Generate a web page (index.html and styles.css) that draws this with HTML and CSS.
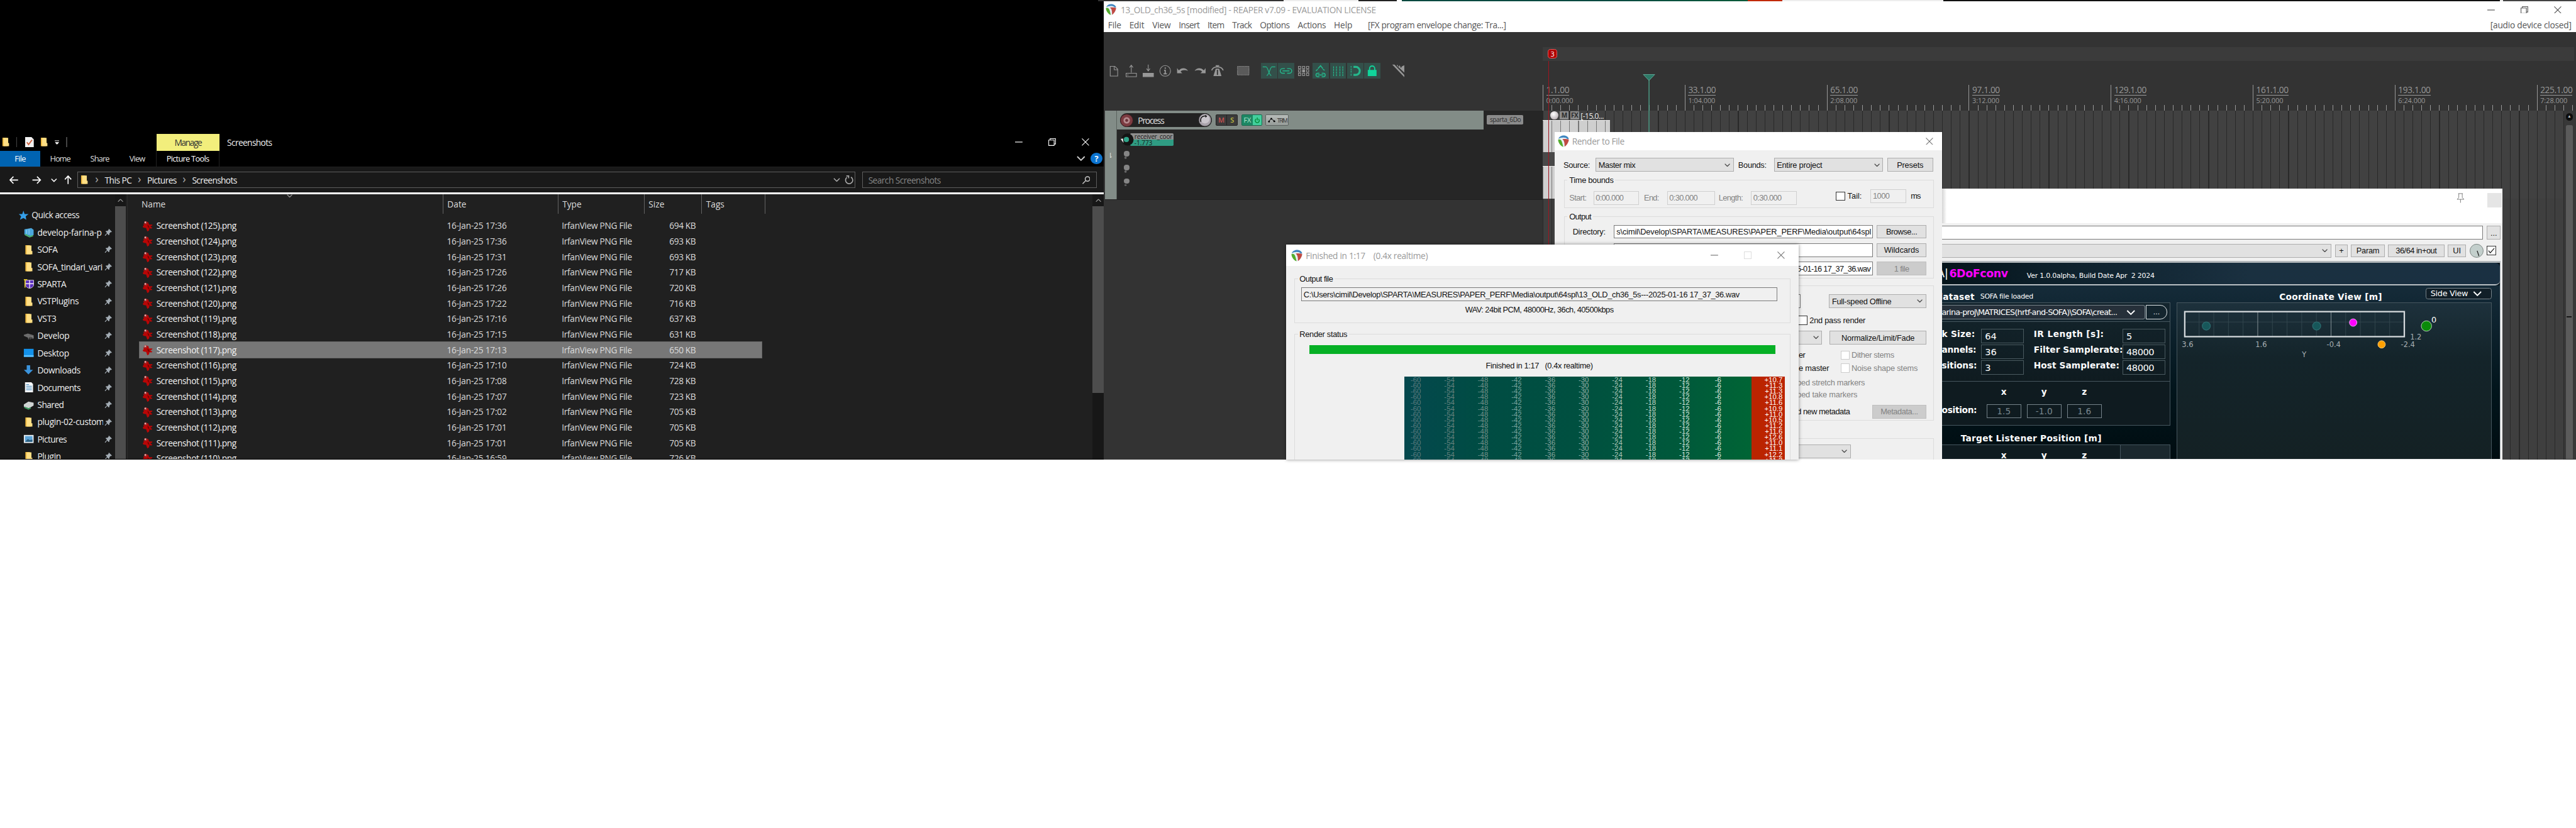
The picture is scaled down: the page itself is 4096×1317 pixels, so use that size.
FILE: index.html
```html
<!DOCTYPE html>
<html lang="en">
<head>
<meta charset="utf-8">
<title>Desktop</title>
<link rel="stylesheet" href="styles.css">
</head>
<body>
<svg class="defs" width="0" height="0">
  <defs>
    <symbol id="logo" viewBox="0 0 20 20"><path d="M10 0C15 0 19.500 3 19.500 7.500C19.500 12 14 20 10.500 20C6 20 .5 12 .5 7.500C.5 3 5 0 10 0Z" fill="#e9f1f5"/><path d="M1 5.500C3 1.500 7 0 10 0C14 0 18 2 19.200 5.500L17 6.500C15 4 12 3.400 9.500 3.500C6 3.500 3.500 4.500 1 5.500Z" fill="#3f86c0"/><path d="M.6 7.500C3 6.500 5 7 6.500 9.500C8 12.500 8.500 16 9.500 19.800C5 19 .4 12 .6 7.500Z" fill="#54ad2f"/><path d="M8 6.500C11 5.500 16 6 19 7C19.600 10 16 17.500 11.800 19.600C12 14 11.500 9 8 6.500Z" fill="#c04a43"/></symbol>
    <symbol id="folder" viewBox="0 0 13 17"><path d="M1 1h7l2 2v13H1z" fill="#f0b93f"/><path d="M3 1.500h8v9h1.500V16H3z" fill="#ffdf85"/></symbol>
    <symbol id="pin" viewBox="0 0 14 14"><path d="M8 1l5 5-1 1-1-.3-2.300 2.300.1 2-1.200 1.200-2.800-2.800L2 13.200l-1-.2L.8 12.200 4.600 8.200 2 5.600l1.300-1 1.800.2L7.400 2.600 7 1.800z" fill="#a3acb4"/></symbol>
    <symbol id="irfan" viewBox="0 0 20 20"><path d="M2 6l4 1 3-4 2 1 1 4 6 0-1 2-3 1 4 3-3 1-2-1-1 4-3 2-2-6-5-1-1-2 2-2z" fill="#b80606"/><path d="M9 8l3 2 1 5-3-3z" fill="#7d0000"/><circle cx="6" cy="4.500" r="2.600" fill="#a83a3a"/><circle cx="5.500" cy="4" r="1.200" fill="#f1c8c8"/></symbol>
    <symbol id="chev" viewBox="0 0 10 6"><path d="M.7.700L5 5 9.300.7" fill="none" stroke="currentColor" stroke-width="1.400"/></symbol>
    <symbol id="close" viewBox="0 0 13 13"><path d="M.5.500l12 12M12.500.500l-12 12" stroke="currentColor" stroke-width="1.200"/></symbol>
    <symbol id="restore" viewBox="0 0 13 13"><path d="M.6 3h9.400v9.400H.6zM3 3V.6h9.400V10H10" fill="none" stroke="currentColor" stroke-width="1.200"/></symbol>
    <symbol id="min" viewBox="0 0 13 13"><path d="M0 6.500h13" stroke="currentColor" stroke-width="1.300"/></symbol>
  </defs>
</svg>
<main class="desktop">

  <section class="explorer">
    <header class="ex-title">
      <div class="ex-quick">
        <svg class="fold"><use href="#folder"/></svg><i class="bar"></i>
        <svg width="15" height="18" viewBox="0 0 15 18"><path d="M0 0h11l4 4v14H0z" fill="#f2f2f2"/><path d="M3 9l3 4 6-8" fill="none" stroke="#d0603c" stroke-width="2"/></svg>
        <svg class="fold"><use href="#folder"/></svg>
        <svg width="8" height="8" viewBox="0 0 8 8"><path d="M0 1h8M1 4h6L4 7z" stroke="#fff" fill="#fff"/></svg><i class="bar"></i>
      </div>
      <div class="ex-manage"><span data-w="47">Manage</span></div>
      <div class="ex-name"><span data-w="78">Screenshots</span></div>
      <div class="ex-buttons"><svg class="wb"><use href="#min"/></svg><svg class="wb"><use href="#restore"/></svg><svg class="wb"><use href="#close"/></svg></div>
    </header>
    <nav class="ex-ribbon">
      <b class="file"><span data-w="19">File</span></b><span class="tab" data-w="35">Home</span><span class="tab" data-w="33">Share</span><span class="tab" data-w="27">View</span><span class="pict"><span data-w="74">Picture Tools</span></span>
      <div class="ex-help"><svg width="15" height="9"><use href="#chev"/></svg><b class="q">?</b></div>
    </nav>
    <div class="ex-address">
      <svg width="112" height="16" viewBox="0 0 112 16" fill="none" stroke="#fff" stroke-width="1.800"><path d="M15 8H1M7 2L1 8l6 6M40 8h14M48 2l6 6-6 6"/><path d="M73 6l4.500 4.500L82 6" stroke-width="1.600"/><path d="M102 15V1M96.500 7L102 1l5.500 6"/></svg>
      <div class="path">
        <svg class="fold"><use href="#folder"/></svg><i>›</i><span data-w="47">This PC</span><i>›</i><span data-w="51">Pictures</span><i>›</i><span data-w="78">Screenshots</span>
        <div class="path-end"><svg width="12" height="7"><use href="#chev"/></svg><svg width="16" height="16" viewBox="0 0 16 16" fill="none" stroke="#aaa" stroke-width="1.800"><path d="M4 3.500A6.200 6.200 0 1 0 11 3M3 1h4v4"/></svg></div>
      </div>
      <div class="search"><span data-w="126">Search Screenshots</span><svg width="14" height="14" viewBox="0 0 14 14" fill="none" stroke="#c8c8c8" stroke-width="1.600"><circle cx="9" cy="5" r="4"/><path d="M6 8l-5.500 5.500"/></svg></div>
    </div>
    <div class="ex-line"></div>
    <div class="ex-main">
      <div class="ex-nav" id="nav"></div>
      <div class="sb"><svg width="10" height="6"><use href="#chev"/></svg><i></i></div>
      <div class="ex-files">
        <div class="ex-head"><span>Name</span><span>Date</span><span>Type</span><span>Size</span><span>Tags</span><svg class="sort" width="10" height="6"><use href="#chev"/></svg></div>
        <div id="files"></div>
      </div>
      <div class="sb sb-right"><svg width="10" height="6"><use href="#chev"/></svg><i></i></div>
    </div>
  </section>

  <section class="reaper">
    <header class="rp-title"><svg width="19" height="20"><use href="#logo"/></svg><span data-w="444">13_OLD_ch36_5s [modified] - REAPER v7.09 - EVALUATION LICENSE</span>
      <div class="rp-buttons"><svg class="wb"><use href="#min"/></svg><svg class="wb"><use href="#restore"/></svg><svg class="wb"><use href="#close"/></svg></div></header>
    <nav class="rp-menu"><span data-w="23">File</span><span data-w="26">Edit</span><span data-w="32">View</span><span data-w="36">Insert</span><span data-w="29">Item</span><span data-w="34">Track</span><span data-w="52">Options</span><span data-w="49">Actions</span><span data-w="32">Help</span><span class="undo" data-w="240">[FX program envelope change: Tra...]</span><span class="dev" data-w="141">[audio device closed]</span></nav>
    <div class="rp-body">
      <div class="rp-left">
        <div class="toolbar">
          <svg viewBox="0 0 28 28"><path d="M8 6h8l5 5v12H8zM15 6v6h6"/></svg>
          <svg viewBox="0 0 28 28"><path d="M14 17V4M11 8l3-4 3 4M5 18h18v6H5z"/><path d="M7 21h2"/></svg>
          <svg viewBox="0 0 28 28"><path d="M14 3v11M11 10l3 4 3-4"/><path d="M5 18h18v6H5z" fill="#989898"/></svg>
          <svg viewBox="0 0 28 28"><circle cx="14" cy="14" r="9.300"/><path d="M14 8v2.500M12 13h2v6M11 19h6" stroke-width="2"/></svg>
          <svg viewBox="0 0 28 28"><path d="M4 9v9h9l-3-3c3-3 8-3 13-1c-4-6-11-6-16-1z" class="f"/></svg>
          <svg viewBox="0 0 28 28"><path d="M24 9v9h-9l3-3c-3-3-8-3-13-1c4-6 11-6 16-1z" class="f"/></svg>
          <svg viewBox="0 0 28 28"><path d="M11 10h6l4 13H7z" class="f"/><path class="slot" d="M14 12v9"/><path d="M4 13c3-8 17-8 20 0M11 5h6" stroke-width="2"/></svg>
          <svg class="gap" viewBox="0 0 28 28"><path d="M4 6h20v15H4z" fill="#5a5a5a" stroke-dasharray="1.500 1"/></svg>
          <svg class="gap on" viewBox="0 0 28 28"><path d="M3 7h6c3 0 5 15 9 15M25 7h-6c-3 0-5 15-9 15" stroke-width="1.300"/></svg>
          <svg class="on" viewBox="0 0 28 28"><path d="M12 18H8a4 4 0 0 1 0-8h4M16 10h4a4 4 0 0 1 0 8h-4M8 14h12" stroke-width="1.600"/></svg>
          <svg viewBox="0 0 28 28"><path d="M5 6h4v4H5zM12 6h4v4h-4zM19 6h4v4h-4zM5 12h4v4H5zM19 12h4v4h-4zM5 18h4v4H5zM12 18h4v4h-4zM19 18h4v4h-4z"/><path class="f" d="M11.500 11.500h5v5h-5z"/></svg>
          <svg class="on" viewBox="0 0 28 28"><path d="M6 14l3-3M9.500 10L14 5l4 5M18 11l3 2M12 24H9a3 3 0 0 1 0-6h3M16 18h3a3 3 0 0 1 0 6h-3M9 21h10" stroke-width="1.700"/></svg>
          <svg class="on" viewBox="0 0 28 28"><path d="M6 6v17M11 6v17M17 6v17M22 6v17" stroke-dasharray="3.500 1" stroke-width="1.300"/></svg>
          <svg class="on" viewBox="0 0 28 28"><path d="M11 7h4a7 7 0 0 1 0 14h-4" stroke-width="3.500"/><path d="M6 7h2M6 21h2M7 10v8" stroke-dasharray="2 1.500" stroke-width="1.800"/></svg>
          <svg class="on lock" viewBox="0 0 28 28"><path d="M9.500 13v-3a4.500 4.500 0 0 1 9 0v3" stroke-width="2"/><path d="M7 13h14v9.500H7z" fill="#10d69b"/></svg>
          <svg class="gap" viewBox="0 0 28 28"><path class="f" d="M3 3h4l17 18v4z"/><path class="f" d="M9 3l2 2 1-2 2 4 2-3 2 5 2-3 4-2v13z"/></svg>
        </div>
        <div class="tcp">
          <div class="tcp-index"><span>1</span></div>
          <div class="tcp-main">
            <div class="tcp-row">
              <div class="tcp-head">
                <div class="tcp-name"><i class="rec"></i><span data-w="45">Process</span><svg class="knob" width="24" height="24" viewBox="0 0 24 24"><circle cx="12" cy="12" r="11" fill="#a9a3ab" stroke="#333"/><circle cx="12" cy="10" r="8" fill="#c9c5cb"/><path d="M5 15C3 8 8 4 13 5" fill="none" stroke="#111" stroke-width="1.600"/><path d="M12 3l4 2-3 3z" fill="#111"/></svg></div>
                <div class="ms"><b class="m">M</b><b class="s">S</b></div>
                <div class="fx"><b>FX</b><b class="pw"><svg width="9" height="10" viewBox="0 0 9 10"><path d="M2.500 2.500a3.500 3.500 0 1 0 4 0M4.500 0v5" fill="none" stroke="#083" stroke-width="1.500"/></svg></b></div>
                <div class="trim"><svg width="14" height="9" viewBox="0 0 14 9"><path d="M1 7l5-5 5 4 2 1" fill="none" stroke="#333" stroke-width="1.300"/><circle cx="2" cy="7" r="1.500"/><circle cx="6" cy="2" r="1.500"/><circle cx="11" cy="6.500" r="1.500"/></svg><span data-w="17">TRIM</span></div>
              </div>
              <div class="chip"><span data-w="54">sparta_6Do</span></div>
            </div>
            <div class="param"><svg width="24" height="24" viewBox="0 0 24 24"><circle cx="13" cy="12" r="10.500" fill="#141414"/><circle cx="11" cy="12" r="4.500" fill="#2fa58a"/><path d="M1 11l4-1 1 8z" fill="#e8e8e8"/></svg><div class="plabel"><span data-w="66">receiver_coor</span><span data-w="31">-1.773</span></div></div>
            <div class="dots"><i></i><i></i><i></i></div>
          </div>
        </div>
      </div>
      <div class="arrange">
        <div class="lane"><b>3</b></div>
        <div class="ruler">
          <div><span data-w="40">1.1.00</span><small data-w="47">0:00.000</small></div>
          <div><span data-w="48">33.1.00</span><small data-w="47">1:04.000</small></div>
          <div><span data-w="48">65.1.00</span><small data-w="47">2:08.000</small></div>
          <div><span data-w="48">97.1.00</span><small data-w="47">3:12.000</small></div>
          <div><span data-w="56">129.1.00</span><small data-w="47">4:16.000</small></div>
          <div><span data-w="56">161.1.00</span><small data-w="47">5:20.000</small></div>
          <div><span data-w="56">193.1.00</span><small data-w="47">6:24.000</small></div>
          <div><span data-w="56">225.1.00</span><small data-w="47">7:28.000</small></div>
        </div>
        <div class="grid-row">
          <div class="tracks">
            <div class="item-head"><i class="ik"></i><b>M</b><b>FX</b><span data-w="40">[-15.0...</span></div>
            <div class="item"></div><div class="item-gap"></div><div class="item two"></div>
            <div class="tracks-empty"></div>
          </div>
          <div class="rp-scroll"><i>▲</i><b></b></div>
        </div>
        <svg class="cursor" width="22" height="110" viewBox="0 0 22 110"><path d="M11 10v100" stroke="#4fa58d" stroke-width="1.500"/><path d="M1 .5h20L11 11z" fill="#2d7967" stroke="#63ab98"/></svg>
        <i class="redline"></i>
      </div>
    </div>
  </section>
  <div class="seam"></div>

  <section class="fxwin">
    <header><svg width="14" height="18" viewBox="0 0 14 18" fill="none" stroke="#777"><path d="M3 1h8M4 1v7L1 11h12l-3-3V1M7 11v6"/></svg><i></i></header>
    <div class="fx-comment"><div class="inp"></div><div class="btn">...</div></div>
    <div class="fx-controls"><div class="sel"><svg class="cv"><use href="#chev"/></svg></div><div class="btn">+</div><div class="btn"><span data-w="40">Param</span></div><div class="btn"><span data-w="71">36/64 in+out</span></div><div class="btn">UI</div><svg width="24" height="26" viewBox="0 0 24 26"><circle cx="12" cy="13" r="11.500" fill="#c3cfcc" stroke="#76807d"/><path d="M13 13l3 9" stroke="#222" stroke-width="1.500"/></svg><div class="chk"><svg width="12" height="10" viewBox="0 0 12 10"><path d="M1 5l3 4 7-8" fill="none" stroke="#222" stroke-width="1.400"/></svg></div></div>
    <div class="plugin">
      <div class="pl-head"><b class="w">A|</b><b class="mg" data-w="102">6DoFconv</b><span data-w="222">Ver 1.0.0alpha, Build Date Apr&nbsp; 2 2024</span></div>
      <div class="pl-body">
        <div class="pl-left">
          <div class="pl-cap"><b data-w="66">dataset</b><span data-w="92">SOFA file loaded</span></div>
          <div class="pl-combo"><div class="combo"><span data-w="305">arina-proj\MATRICES(hrtf-and-SOFA)\SOFA\creat...</span><svg width="18" height="9"><use href="#chev"/></svg></div><div class="more">...</div></div>
          <div class="pl-info">
            <b><span data-w="58">k Size:</span></b><div>64</div><b class="l"><span data-w="122">IR Length [s]:</span></b><div>5</div>
            <b><span data-w="60">annels:</span></b><div>36</div><b class="l"><span data-w="155">Filter Samplerate:</span></b><div><span data-w="48">48000</span></div>
            <b><span data-w="61">sitions:</span></b><div>3</div><b class="l"><span data-w="149">Host Samplerate:</span></b><div><span data-w="48">48000</span></div>
          </div>
          <div class="pl-pos">
            <b></b><b>x</b><b>y</b><b>z</b>
            <b class="r"><span data-w="61">osition:</span></b><div>1.5</div><div>-1.0</div><div>1.6</div>
          </div>
          <div class="pl-target"><b data-w="245">Target Listener Position [m]</b></div>
          <div class="pl-pos last"><b></b><b>x</b><b>y</b><b>z</b><i></i></div>
        </div>
        <div class="pl-right">
          <div class="pl-rcap"><b data-w="179">Coordinate View [m]</b><div class="side"><span data-w="65">Side View</span><svg width="18" height="9"><use href="#chev"/></svg></div></div>
          <svg class="plot" width="547" height="271" viewBox="0 0 547 271">
            <path d="M13 33H394M38 15V58M63.500 15V58M89 15V58M114.500 15V58M165.500 15V58M191 15V58M216.500 15V58M242 15V58M293 15V58M318.500 15V58M344 15V58M369.500 15V58" stroke="#34474f"/>
            <path d="M140 15V58M267.500 15V58" stroke="#8d999e"/>
            <rect x="13" y="15" width="382" height="43.500" fill="none" stroke="#d5dadd" stroke-width="2.500"/>
            <g fill="#17575a" stroke="#2a6a6d" stroke-width="1.500"><circle cx="50.500" cy="40" r="7"/><circle cx="242.500" cy="40" r="7"/></g>
            <circle cx="306" cy="34" r="6.500" fill="#f0f" stroke="#ffb4ff"/>
            <circle cx="433.500" cy="40" r="9" fill="#0a8a0a" stroke="#c5d8c5"/>
            <circle cx="355.500" cy="72" r="6.500" fill="#ffa000" stroke="#ffd080"/>
            <text x="442" y="34" class="wt">0</text>
            <text x="405" y="63.500">1.2</text><text x="8" y="76.500">3.6</text><text x="136" y="76.500">1.6</text><text x="260" y="76.500">-0.4</text><text x="389" y="76.500">-2.4</text><text x="217" y="94">Y</text>
          </svg>
        </div>
      </div>
    </div>
  </section>

  <section class="dialog render">
    <header><svg width="20" height="21"><use href="#logo"/></svg><span data-w="91">Render to File</span><svg class="x wb"><use href="#close"/></svg></header>
    <div class="r-source"><span data-w="46">Source:</span><div class="sel"><span data-w="64">Master mix</span><svg class="cv"><use href="#chev"/></svg></div><i></i><span data-w="49">Bounds:</span><div class="sel"><span data-w="79">Entire project</span><svg class="cv"><use href="#chev"/></svg></div><i></i><div class="btn"><span data-w="46">Presets</span></div></div>
    <div class="group g-time"><div class="gt"><span data-w="77">Time bounds</span></div>
      <div class="r-time dis"><span data-w="30">Start:</span><div class="inp"><span data-w="48">0:00.000</span></div><i></i><span data-w="26">End:</span><div class="inp"><span data-w="49">0:30.000</span></div><i></i><span data-w="42">Length:</span><div class="inp"><span data-w="49">0:30.000</span></div><i></i><div class="chk up"></div><i></i><span class="blk up" data-w="25">Tail:</span><div class="inp up"><span data-w="29">1000</span></div><i></i><span class="blk up" data-w="17">ms</span></div></div>
    <div class="group g-out"><div class="gt"><span data-w="38">Output</span></div>
      <div class="r-out"><span data-w="57">Directory:</span><div class="inp"><span data-w="443">s\cimil\Develop\SPARTA\MEASURES\PAPER_PERF\Media\output\64spl</span></div><i></i><div class="btn"><span data-w="54">Browse...</span></div></div>
      <div class="r-out"><span></span><div class="inp"></div><i></i><div class="btn"><span data-w="61">Wildcards</span></div></div>
      <div class="r-out"><span></span><div class="inp end"><span data-w="128">5-01-16 17_37_36.wav</span></div><i></i><div class="btn off"><span data-w="26">1 file</span></div></div></div>
    <div class="group g-opt">
      <div class="r-a"><div class="inp"></div><i></i><div class="sel"><span data-w="103">Full-speed Offline</span><svg class="cv"><use href="#chev"/></svg></div></div>
      <div class="r-b"><div class="chk"></div><span data-w="97">2nd pass render</span></div>
      <div class="r-c"><div class="sel"><svg class="cv"><use href="#chev"/></svg></div><i></i><div class="btn"><span data-w="127">Normalize/Limit/Fade</span></div></div>
      <div class="r-d"><span data-w="11">er</span><div class="chk"></div><span class="g" data-w="74">Dither stems</span></div>
      <div class="r-d"><span data-w="53">e master</span><div class="chk"></div><span class="g" data-w="115">Noise shape stems</span></div>
      <div class="r-e"><span class="g" data-w="118">ped stretch markers</span></div>
      <div class="r-e"><span class="g" data-w="105">ped take markers</span></div>
      <div class="r-f"><span data-w="92">d new metadata</span><div class="btn off"><span data-w="65">Metadata...</span></div></div>
    </div>
    <div class="group g-last"><div class="sel"><svg class="cv"><use href="#chev"/></svg></div></div>
  </section>

  <section class="dialog finished">
    <header><svg width="20" height="21"><use href="#logo"/></svg><span data-w="212">Finished in 1:17 &nbsp; &nbsp;(0.4x realtime)</span><div class="f-buttons"><svg class="wb"><use href="#min"/></svg><i></i><svg class="wb"><use href="#close"/></svg></div></header>
    <div class="group f-file"><div class="gt"><span data-w="58">Output file</span></div>
      <div class="inp"><span data-w="758">C:\Users\cimil\Develop\SPARTA\MEASURES\PAPER_PERF\Media\output\64spl\13_OLD_ch36_5s---2025-01-16 17_37_36.wav</span></div>
      <p><span data-w="258">WAV: 24bit PCM, 48000Hz, 36ch, 40500kbps</span></p></div>
    <div class="group f-status"><div class="gt"><span data-w="83">Render status</span></div>
      <div class="progress"></div>
      <p><span data-w="186">Finished in 1:17 &nbsp; (0.4x realtime)</span></p>
      <div class="meter" id="meter"></div></div>
  </section>
</main>
<script src="app.js"></script>
</body>
</html>
```
FILE: styles.css
```css
* { box-sizing: border-box; }
body { margin: 0; background: #fff; }
svg { display: block; flex: none; }
.defs { position: absolute; }
i, b { font-style: normal; }
span { white-space: nowrap; }
.desktop { position: relative; width: 4480px; height: 1440px; zoom: 0.9142857; overflow: hidden; background: #fff; font: 15px "Open Sans", "Noto Sans", sans-serif; }
.wb { width: 13px; height: 13px; }
.fold { width: 13px; height: 17px; }

/* Explorer */
.explorer { position: absolute; left: 0; top: 0; width: 1920px; height: 799px; background: #000; color: #f2f2f2; display: flex; flex-direction: column; overflow: hidden; padding-top: 233px; }
.ex-title { flex: none; height: 29px; display: flex; align-items: center; }
.ex-quick { width: 272px; display: flex; align-items: center; padding-left: 3px; }
.ex-quick .bar { width: 2px; height: 17px; background: #444; margin: 0 14px 0 10px; }
.ex-quick svg + .fold { margin: 0 12px 0 11px; }
.ex-quick svg + .bar { margin-left: 12px; }
.ex-manage { width: 110px; height: 29px; background: #f2ee7c; color: #333; display: flex; align-items: center; justify-content: center; }
.ex-name { padding-left: 13px; }
.ex-buttons { margin-left: auto; display: flex; gap: 45px; padding-right: 26px; color: #fff; }
.ex-ribbon { flex: none; height: 28px; display: flex; align-items: center; color: #ddd; font-size: 14px; }
.ex-ribbon .file { width: 70px; height: 28px; background: #0063b1; display: flex; align-items: center; justify-content: center; font-weight: 400; margin-right: 17px; color: #fff; }
.ex-ribbon .tab { margin-right: 35px; }
.ex-ribbon .tab:nth-of-type(3) { margin-right: 19px; }
.pict { width: 111px; height: 28px; border: solid #222; border-width: 0 1px; display: flex; align-items: center; justify-content: center; color: #fff; }
.ex-help { margin-left: auto; display: flex; align-items: center; gap: 9px; padding-right: 3px; color: #ccc; }
.q { width: 20px; height: 20px; border-radius: 50%; background: #0b74d1; color: #fff; text-align: center; line-height: 20px; }
.ex-address { flex: none; height: 45px; background: #191919; display: flex; align-items: center; padding-left: 16px; border-top: 1px solid #202020; }
.ex-address > svg { margin-right: 6px; }
.path { width: 1354px; height: 28px; border: 1px solid #5d5d5d; display: flex; align-items: center; padding-left: 5px; }
.path i { width: 27px; text-align: center; color: #aaa; font-size: 20px; line-height: 20px; padding-bottom: 4px; }
.path .fold + i { margin-left: 2px; }
.path-end { margin-left: auto; display: flex; align-items: center; gap: 8px; color: #aaa; padding-right: 2px; }
.search { margin-left: 12px; width: 408px; height: 28px; border: 1px solid #5d5d5d; display: flex; align-items: center; justify-content: space-between; padding: 0 11px 0 9px; color: #868686; }
.ex-line { flex: none; height: 3px; background: #fff; }
.ex-main { height: 461px; display: flex; background: #202020; overflow: hidden; }
.ex-nav { width: 200px; background: #191919; padding-top: 21px; }
.nav-item { height: 30px; display: flex; align-items: center; padding-left: 40px; }
.nav-item .ic { width: 19px; height: 18px; margin-right: 6px; }
.nav-item .tx { width: 114px; overflow: hidden; margin-right: 3px; }
.nav-item.root { padding-left: 32px; }
.nav-item.root .ic { margin-right: 4px; }
.sb { width: 19px; background: #171717; color: #999; margin-right: 2px; }
.sb svg { transform: rotate(180deg); margin: 8px auto 7px; }
.sb i { display: block; height: 440px; background: #4d4d4d; }
.sb-right { margin: 0 0 0 auto; width: 20px; }
.sb-right i { height: 325px; }
.ex-files { width: 1110px; border-left: 1px solid #2c2c2c; }
.ex-head { position: relative; height: 32px; display: grid; grid-template-columns: 549px 200px 150px 100px 110px; margin-bottom: 9px; color: #dedede; }
.ex-head span { border-right: 1px solid #636363; padding-left: 7px; line-height: 34px; }
.ex-head span:first-child { padding-left: 24px; }
.sort { position: absolute; left: 277px; top: 0; color: #999; }
.frow { margin-left: 21px; width: 1081px; height: 27px; display: grid; grid-template-columns: 534px 200px 150px 83px; align-items: center; color: #dcdcdc; }
.frow .n { display: flex; align-items: center; gap: 5px; padding-left: 4px; color: #f5f5f5; }
.frow .sz { text-align: right; }
.frow.sel-row { background: #777; outline: 1px solid #666; outline-offset: -1px; }

/* Reaper main window */
.reaper { position: absolute; left: 1920px; top: 2px; width: 2560px; height: 797px; background: #333; display: flex; flex-direction: column; overflow: hidden; }
.seam { position: absolute; left: 1910px; top: 0; width: 2570px; height: 2px; background: linear-gradient(90deg, #333 323px, #eee 323px 453px, #222 453px 520px, #fff 520px 528px, #064a40 528px 900px, #0b5a3a 1130px, #c22a08 1130px 1190px, #eee 1190px 1470px, #111 1470px 2438px, #eee 2438px 2443px, #444 2443px); }
.rp-title { flex: none; height: 30px; background: #fff; color: #999; display: flex; align-items: center; padding-left: 3px; gap: 7px; }
.rp-buttons { margin-left: auto; display: flex; gap: 45px; padding-right: 25px; color: #555; }
.rp-menu { flex: none; height: 24px; background: #fff; color: #555; display: flex; align-items: center; gap: 14px; padding: 0 8px 2px 7px; }
.rp-menu .undo { margin-left: 13px; }
.rp-menu .dev { margin-left: auto; }
.rp-body { flex: 1; display: flex; }
.rp-left { flex: none; width: 763px; }
.toolbar { height: 137px; padding: 53px 0 0 3px; display: flex; gap: 2px; }
.toolbar svg { width: 28px; height: 28px; fill: none; stroke: #989898; stroke-width: 1.2; }
.toolbar .f { fill: #989898; stroke: none; }
.toolbar .slot { stroke: #333; stroke-width: 2; }
.toolbar .gap { margin-left: 15px; }
.toolbar .on { background: #33504a; stroke: #25b88c; }
.toolbar .lock { stroke: #10d69b; }
.tcp { height: 155px; margin-left: 2px; display: flex; background: #262626; border-bottom: 1px solid #202020; }
.tcp-index { width: 20px; background: #828c87; color: #eee; font-size: 11px; display: flex; align-items: center; justify-content: center; border-right: 1px solid #5b625e; }
.tcp-index span { transform: rotate(180deg); }
.tcp-main { flex: 1; }
.tcp-row { display: flex; height: 32px; }
.tcp-head { flex: none; width: 638px; background: #828c87; display: flex; align-items: center; padding-left: 6px; }
.tcp-name { width: 160px; height: 24px; border-radius: 12px; background: #222; color: #e4e4e4; display: flex; align-items: center; gap: 8px; margin-right: 6px; }
.rec { width: 23px; height: 23px; border-radius: 50%; background: radial-gradient(circle, #6b3138 0 2px, #b48a8e 3px 5px, #7c3b41 6px); border: 1px solid #3b1c1f; }
.knob { margin-left: auto; }
.ms, .fx { display: flex; height: 20px; border: 1px solid #222; border-radius: 2px; font-size: 12px; line-height: 18px; text-align: center; overflow: hidden; }
.ms { width: 39px; background: #3b3b3b; margin-right: 6px; }
.ms b { flex: 1; font-weight: 600; }
.m { color: #c85050; border-right: 1px solid #222; }
.s { color: #bdbc40; }
.fx { width: 36px; background: #1d8764; border-color: #17674d; color: #aee8d0; margin-right: 6px; }
.fx b { width: 20px; font-weight: 400; }
.fx .pw { width: 16px; background: #43cf9d; padding: 4px 3px; }
.trim { width: 40px; height: 20px; border: 1px solid #5c625f; border-radius: 2px; background: linear-gradient(#b7bcb9, #969c99); display: flex; align-items: center; gap: 2px; padding-left: 3px; font-size: 10px; color: #333; }
.chip { flex: none; margin: 7px 0 0 6px; width: 63px; height: 17px; border-radius: 2px; background: #8b8b8b; color: #2c2c2c; font-size: 11px; line-height: 16px; padding-left: 5px; }
.param { display: flex; height: 24px; margin: 6px 0 0 6px; }
.plabel { width: 75px; height: 22px; margin: 1px 0 0 -6px; border-radius: 2px; background: linear-gradient(#8f8f8f 50%, #2f9c83 50%); padding-left: 7px; font-size: 11px; line-height: 11px; color: #1a1a1a; display: flex; flex-direction: column; align-items: flex-start; }
.param svg { position: relative; z-index: 1; }
.dots { display: flex; flex-direction: column; gap: 15px; padding: 8px 0 0 13px; }
.dots i { width: 9px; height: 9px; border-radius: 50%; background: #858585; box-shadow: -2px 7px 0 -3px #666; }
.arrange { position: relative; flex: none; width: 1797px; display: flex; flex-direction: column; padding-top: 26px; }
.lane { margin-right: 3px; height: 24px; background: #3b3b3b; padding: 3px 0 0 9px; }
.lane b { display: block; width: 16px; height: 17px; border-radius: 5px; background: #b10000; border: 1px solid #e06060; color: #fff; font: 12px/15px "Open Sans", sans-serif; text-align: center; }
.ruler { height: 45px; margin: 42px 0 0; flex: none; display: flex; overflow: hidden; color: #989898; background: repeating-linear-gradient(90deg, #989898 0 1.100px, transparent 1.100px 15.436px) 0 100% / 100% 10px no-repeat; font-size: 15px; }
.ruler div { flex: none; width: 246.970px; height: 45px; border-left: 1px solid #989898; padding-left: 5px; display: flex; flex-direction: column; align-items: flex-start; }
.ruler span { line-height: 17px; border-bottom: 1px solid #989898; }
.ruler small { font-size: 12px; line-height: 18px; }
.grid-row { flex: 1; display: flex; }
.tracks { width: 1776px; background: repeating-linear-gradient(90deg, #292929 0 1.200px, #414141 1.200px 15.436px); }
.item-head { height: 16px; width: 117px; display: flex; align-items: center; gap: 3px; padding-left: 13px; font-size: 13px; color: #eee; }
.ik { width: 14px; height: 14px; border-radius: 50%; background: radial-gradient(circle at 40% 35%, #fff, #a59a9f); }
.item-head b { width: 15px; height: 14px; background: #8b8b8b; color: #2a2a2a; font-size: 11px; line-height: 14px; text-align: center; letter-spacing: -.5px; }
.item { width: 117px; height: 56px; border-top: 2px solid #eee; background: repeating-linear-gradient(90deg, #777 0 1.200px, #cfcfcf 1.200px 15.436px); }
.item-gap { width: 21px; height: 24px; background: #484848; }
.item.two { height: 57px; width: 21px; }
.tracks-empty { height: 453px; background: rgba(50, 50, 50, .1); }
.rp-scroll { width: 21px; background: #383838; padding-left: 3px; }
.rp-scroll i { display: block; width: 13px; height: 13px; margin: 4px 0 8px; border-radius: 50%; background: #0d0d0d; color: #ccc; font-size: 7px; line-height: 12px; text-align: center; }
.rp-scroll b { display: block; width: 13px; height: 581px; border-radius: 3px 3px 0 0; background: linear-gradient(#111, #111) 50% 332px / 9px 2px no-repeat, #5b5b5b; }
.cursor { position: absolute; left: 174px; top: 73px; }
.redline { position: absolute; left: 10px; top: 50px; width: 1px; height: 700px; background: #a31420; }

/* Shared form controls */
.sel, .btn { background: #e1e1e1; border: 1px solid #adadad; height: 24px; display: flex; align-items: center; color: #111; }
.sel { justify-content: space-between; padding: 0 5px 0 4px; }
.btn { justify-content: center; }
.off { background: #ccc; border-color: #bfbfbf; color: #838383; }
.cv { width: 10px; height: 6px; color: #444; margin-left: auto; }
.inp { background: #fff; border: 1px solid #7a7a7a; height: 24px; display: flex; align-items: center; padding-left: 3px; }
.chk { width: 16px; height: 16px; background: #fff; border: 1px solid #333; display: flex; align-items: center; justify-content: center; }
.g, .dis { color: #838383; }

/* Dialogs */
.dialog { position: absolute; background: #f0f0f0; color: #111; font: 14px "Liberation Sans", Arial, sans-serif; display: flex; flex-direction: column; overflow: hidden; }
.dialog header { flex: none; background: #fff; color: #999; font: 15px "Open Sans", sans-serif; display: flex; align-items: center; gap: 5px; }
.group { flex: none; border: 1px solid #dcdcdc; }
.gt { width: max-content; height: 18px; line-height: 18px; margin: -9px 0 0 5px; padding: 0 3px; background: #f0f0f0; }
.render { left: 2704px; top: 230px; width: 673px; height: 569px; }
.render header { height: 31px; padding-left: 5px; }
.render .x { margin: 0 15px 0 auto; color: #777; }
.render .group { margin-left: 16px; width: 643px; }
.r-source, .r-time, .r-out, .r-a, .r-c, .r-d { display: grid; align-items: center; }
.r-source { grid-template-columns: 56px 240px 8px 62px 190px 7px 80px; padding: 14px 0 0 15px; }
.g-time { height: 49px; margin-top: 14px; }
.r-time { grid-template-columns: 42px 79px 9px 40px 84px 6px 56px 80px 68px 16px 4px 40px 62px 8px 20px; padding-left: 8px; height: 34px; margin-top: 4px; }
.r-time .inp { background: #f0f0f0; border-color: #cfcfcf; }
.r-time .blk { color: #111; }
.r-time .up { position: relative; top: -3px; }
.g-out { height: 109px; margin-top: 14px; }
.r-out { grid-template-columns: 72px 450px 7px 86px; padding-left: 14px; margin-bottom: 8px; }
.g-out .gt { margin-bottom: 5px; }
.inp.end { justify-content: flex-end; padding-right: 3px; }
.g-opt { height: 235px; margin-top: 12px; padding-top: 14px; }
.r-a { grid-template-columns: 30px 50px 169px; padding-left: 380px; }
.r-b { display: flex; align-items: center; gap: 4px; padding: 13px 0 0 406px; }
.r-c { grid-template-columns: 68px 13px 168px; padding: 10px 0 0 380px; }
.r-d { grid-template-columns: 73px 19px auto; padding: 10px 0 0 407px; height: 27px; }
.r-d + .r-d { padding-top: 6px; height: 22px; }
.r-d .chk { border-color: #ccc; }
.r-e { padding: 0 0 0 404px; height: 21px; line-height: 21px; }
.r-d + .r-e { margin-top: 7px; }
.r-f { display: flex; align-items: center; padding: 7px 0 0 404px; }
.r-f .btn { width: 94px; margin-left: 39px; }
.g-last { margin-top: 30px; height: 60px; padding: 10px 0 0 380px; }
.g-last .sel { width: 118px; }
.finished { left: 2237px; top: 426px; width: 891px; height: 373px; box-shadow: 0 0 6px rgba(0, 0, 0, .45); }
.finished header { height: 37px; padding-left: 9px; }
.f-buttons { margin-left: auto; display: flex; gap: 45px; align-items: center; padding-right: 24px; color: #777; }
.f-buttons i { width: 13px; height: 13px; border: 1px solid #ddd; }
.finished .group { margin-left: 14px; width: 863px; }
.f-file { margin-top: 22px; height: 77px; }
.f-file .inp { width: 828px; margin: 5px 0 0 11px; background: #f0f0f0; }
.finished p { width: 828px; height: 18px; line-height: 18px; text-align: center; margin: 6px 0 0 11px; }
.f-status { margin-top: 19px; height: 240px; }
.progress { width: 811px; height: 16px; margin: 9px 0 0 25px; background: #06b025; }
.f-status p { margin: 12px 0 9px 11px; }
.meter { width: 662px; height: 145px; margin-left: 190px; overflow: hidden; display: flex; background: linear-gradient(90deg, #04484e, #004c43 20%, #005040 45%, #005a3a 75%, #006535 604px, #bb2400 604px); font: 12.500px/10px "Liberation Sans", Arial, sans-serif; padding-top: 1px; }
.meter div { width: 58.400px; text-align: center; flex: none; }
.meter div:first-child { margin-left: -9px; }
.meter .peaks { width: 83px; text-align: right; color: #fff; }

/* FX window */
.fxwin { position: absolute; left: 3377px; top: 328px; width: 975px; height: 471px; background: #f0f0f0; overflow: hidden; font: 14px "Liberation Sans", Arial, sans-serif; color: #111; }
.fxwin header { height: 60px; background: linear-gradient(90deg, #d5d5d5, #fff 8px); display: flex; justify-content: flex-end; padding: 8px 1px 0 0; gap: 40px; }
.fxwin header i { width: 25px; height: 25px; background: #e5e5e5; }
.fx-comment { display: grid; grid-template-columns: 941px 24px; gap: 7px; padding-top: 5px; }
.fx-comment .inp, .fx-controls .sel { border-left: 0; }
.fx-controls { display: flex; gap: 6px; align-items: center; padding-top: 7px; height: 31px; }
.fx-controls .sel { width: 677px; margin-right: 1px; }
.fx-controls .btn { width: 22px; height: 22px; }
.fx-controls .btn:nth-child(3) { width: 58px; }
.fx-controls .btn:nth-child(4) { width: 98px; }
.fx-controls .btn:nth-child(5) { width: 32px; }
.plugin { margin-top: 6px; width: 972px; height: 345px; border-top: 4px solid #b3b8bb; border-right: 2px solid #b3b8bb; background: #03121a; font-family: "DejaVu Sans", Verdana, sans-serif; color: #fff; }
.pl-head { height: 39px; border-bottom: 3px solid #b9bfc3; border-radius: 0 8px 8px 0; background: linear-gradient(90deg, #05141b, #0d202b 20%, #1a3040 55%, #1a3042); display: flex; align-items: center; }
.pl-head .w { font-size: 19px; margin-left: -8px; width: 21px; font-weight: 400; }
.pl-head .mg { color: #f0f; font-size: 19px; margin-right: 33px; }
.pl-head span { font-size: 12px; padding-top: 8px; }
.pl-body { height: 302px; display: flex; gap: 11px; background: linear-gradient(#152b39, #02151c 60%, #000d11); }
.pl-left { width: 397px; overflow: hidden; }
.pl-cap { height: 30px; padding-top: 9px; display: flex; align-items: center; gap: 10px; font-size: 12px; }
.pl-cap b { font-size: 15px; margin-left: -9px; }
.pl-combo { height: 34px; border: 1px solid #46565e; border-width: 1px 1px 1px 0; display: flex; align-items: center; background: #14252e; gap: 1px; }
.combo { width: 354px; height: 25px; border: 1px solid #77838a; border-left: 0; border-radius: 0 4px 4px 0; background: #26303a; display: flex; align-items: center; justify-content: space-between; padding-right: 15px; font-size: 14px; }
.more { width: 37px; height: 25px; border: 1px solid #dfe4e6; border-radius: 0 12px 12px 0; text-align: center; font-size: 12px; line-height: 25px; }
.pl-info { height: 104px; border: 1px solid #46565e; border-width: 0 1px 1px 0; background: linear-gradient(#122229, #0f1b20); display: grid; grid-template-columns: 60px 82px 172px 75px; padding-top: 12px; grid-auto-rows: 27.500px; font-size: 15px; }
.pl-info b { line-height: 19px; }
.pl-info b.l { padding-left: 18px; }
.pl-info div { height: 25px; border: 1px solid #4a5a60; padding-left: 6px; display: flex; align-items: center; width: 75px; font-size: 16px; }
.pl-info b + div { margin-left: 8px; }
.pl-info b.l + div { margin-left: 0; }
.pl-pos { height: 76px; border: 1px solid #46565e; border-width: 0 1px 1px 0; background: #0f1b20; display: grid; grid-template-columns: 68px 60px 60px 60px; column-gap: 10px; grid-template-rows: 39px 24px; text-align: center; font-size: 15px; }
.pl-pos b { line-height: 36px; }
.pl-pos .r { line-height: 20px; text-align: left; }
.pl-pos div { border: 1px solid #75838a; color: #77858c; line-height: 23px; }
.pl-target { height: 33px; display: flex; align-items: center; padding: 12px 0 0 33px; font-size: 15px; }
.pl-pos.last { border-top-width: 1px; grid-template-columns: 68px 60px 60px 60px auto; }
.pl-pos.last i { background: #1b282e; border-left: 1px solid #46565e; margin-left: 22px; height: 76px; }
.pl-right { width: 549px; }
.pl-rcap { height: 30px; display: flex; align-items: center; padding-left: 179px; font-size: 15px; }
.pl-rcap b { padding-top: 10px; }
.side { margin-left: auto; width: 115px; height: 20px; margin-bottom: 1px; border: 1px solid #77838a; border-radius: 4px; background: #111f28; display: flex; align-items: center; justify-content: space-between; padding: 0 15px 0 7px; font-size: 14px; }
.plot { width: 549px; height: 272px; border: 1px solid #46565e; border-bottom: 0; background: linear-gradient(#1d313c, #14242a 35%, #142124); fill: #aab2b5; font-size: 12.500px; }
.plot .wt { fill: #fff; font-size: 14px; }
```
FILE: app.js
```js
// Sidebar icons
const use = id => `<use href="#${id}"/>`;
const icons = {
  star: '<path d="M9 1l2 6h7l-5 4 1 6-5-3-6 3 2-6-4-4h6z" fill="#35a0ea"/>',
  net: '<path d="M2 4l12-2 4 3v9l-5 2L2 13z" fill="#4ba7dd"/><path d="M6 5v7M10 4v9" stroke="#a8dcf5"/><path d="M3 13l8 4 6-2" stroke="#4caf72" stroke-width="2.500" fill="none"/>',
  sparta: '<path d="M4 3h14v8c0 4-5 6-7 6s-7-2-7-6z" fill="#5a2fc0" stroke="#eadcf0"/><path d="M11 3v14M4 9h14" stroke="#f3e6f6" stroke-width="1.500"/><path d="M1 2h6M3 2v14" stroke="#e0c62e" stroke-width="1.800"/>',
  chip: '<path d="M1 7l7-2 10 3v5l-3-2-7 1-7-3z" fill="#6d6d6d"/><path d="M9 11v4M12 11v4M15 10v4M17 10v4" stroke="#999"/>',
  desk: '<path d="M1 2h17v14H1z" fill="#1291ea"/><path d="M1 13h17v3H1z" fill="#5cc1ff"/>',
  down: '<path d="M6 1h6v8h5l-8 8-8-8h5z" fill="#3b94dd"/>',
  doc: '<path d="M3 0h11l3 3v15H3z" fill="#f4f6f8"/><path d="M5 4h5M5 7h10M5 10h10M5 13h10" stroke="#5796c4" stroke-width="1.300"/>',
  disk: '<path d="M1 9l8-5 9 2v5l-8 5-9-3z" fill="#cfd3d3"/><path d="M2 14l7 3 4-2" stroke="#3f9c62" stroke-width="2.500" fill="none"/>',
  pics: '<path d="M1 2h17v14H1z" fill="#e9eef2"/><path d="M3 4h13v10H3z" fill="#5da4d8"/><path d="M3 14l5-5 3 2 5-1v4z" fill="#2b5f80"/>'
};
const nav = [['star', 'Quick access', 83], ['net', 'develop-farina-p', 112], ['folder', 'SOFA', 35], ['folder', 'SOFA_tindari_vari', 113], ['sparta', 'SPARTA', 50], ['folder', 'VSTPlugins', 72], ['folder', 'VST3', 33], ['chip', 'Develop', 56], ['desk', 'Desktop', 55], ['down', 'Downloads', 75], ['doc', 'Documents', 75], ['disk', 'Shared', 46], ['folder', 'plugin-02-custom', 116], ['pics', 'Pictures', 51], ['folder', 'Plugin', 41]];
document.getElementById('nav').innerHTML = nav.map(([ic, label, w], i) =>
  `<div class="nav-item${i ? '' : ' root'}"><svg class="ic" viewBox="0 0 19 18">${ic === 'folder' ? use('folder') : icons[ic]}</svg><div class="tx"><span data-w="${w}">${label}</span></div>${i ? `<svg width="14" height="14">${use('pin')}</svg>` : ''}</div>`).join('');

// File listing: number, time, size
const files = [[125, '17:36', 694], [124, '17:36', 693], [123, '17:31', 693], [122, '17:26', 717], [121, '17:26', 720], [120, '17:22', 716], [119, '17:16', 637], [118, '17:15', 631], [117, '17:13', 650], [116, '17:10', 724], [115, '17:08', 728], [114, '17:07', 723], [113, '17:02', 705], [112, '17:01', 705], [111, '17:01', 705], [110, '16:59', 726]];
document.getElementById('files').innerHTML = files.map(([n, t, s]) =>
  `<div class="frow${n === 117 ? ' sel-row' : ''}"><div class="n"><svg width="20" height="20">${use('irfan')}</svg><span data-w="139">Screenshot (${n}).png</span></div><div><span data-w="104">16-Jan-25 ${t}</span></div><div><span data-w="122">IrfanView PNG File</span></div><div class="sz"><span data-w="46">${s} KB</span></div></div>`).join('');

// Render meter: dB scale columns and peak values per channel
const peaks = ['+10.7', '+11.3', '+11.3', '+10.8', '+11.6', '+10.9', '+11.0', '+10.5', '+11.2', '+11.6', '+12.6', '+11.0', '+11.1', '+12.2', '+11.2'];
const shades = ['#5d7b80', '#66827f', '#74908a', '#7ba39e', '#8ba69f', '#9ab0a8', '#adc5b9', '#c3d8cc', '#d8e6dc', '#e6f0e8'];
document.getElementById('meter').innerHTML = [-60, -54, -48, -42, -36, -30, -24, -18, -12, -6].map((v, i) =>
  `<div style="color:${shades[i]}">${peaks.map(() => v).join('<br>')}</div>`).join('') + `<div class="peaks">${peaks.join('<br>')}</div>`;

// Adjust tracking so that each label keeps its designed width in any font
const scale = document.querySelector('.desktop').getBoundingClientRect().width / 4480;
const width = el => { const r = document.createRange(); r.selectNodeContents(el); return r.getBoundingClientRect().width / scale; };
const fit = () => document.querySelectorAll('[data-w]').forEach(el => {
  const n = el.textContent.length;
  let ls = 0;
  el.style.letterSpacing = '0px';
  for (let k = 0; k < 2; k++) {
    ls += (el.dataset.w - width(el)) / n;
    el.style.letterSpacing = ls.toFixed(3) + 'px';
  }
});
fit();
document.fonts.ready.then(fit);
```
